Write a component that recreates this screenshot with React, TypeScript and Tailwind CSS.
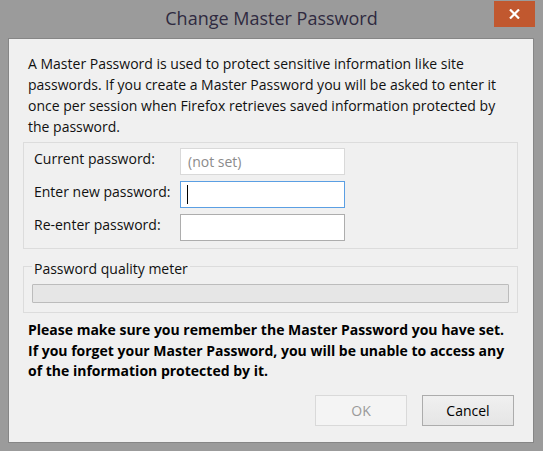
export default function App() {
  return (
    <div className="relative w-[543px] h-[451px] bg-[#9b9b9b] flex flex-col font-['Open_Sans',sans-serif] text-black">
      <div className="h-[38px] flex justify-center pt-[5px] text-[18px] leading-[26px] text-[#2f2a40]">
        Change Master Password
      </div>
      <button className="absolute top-[1px] right-[8px] w-[41px] h-[26px] bg-[#c1582f] flex items-center justify-center">
        <svg width="11" height="10" viewBox="0 0 11 10">
          <path d="M1 0.5 L10 9.5 M10 0.5 L1 9.5" stroke="white" strokeWidth="2.2" fill="none" />
        </svg>
      </button>
      <div className="ml-[8px] w-[526px] h-[405px] bg-[#f0f0f0] border border-[#868686] flex flex-col">
        <div className="pl-[19px] pt-[14px] text-[14px] leading-[21px] whitespace-nowrap text-[#111]">
          <div>A Master Password is used to protect sensitive information like site</div>
          <div>passwords. If you create a Master Password you will be asked to enter it</div>
          <div>once per session when Firefox retrieves saved information protected by</div>
          <div>the password.</div>
        </div>
        <div className="ml-[14px] mt-[5px] w-[495px] h-[107px] border border-[#dcdcdc] flex flex-col gap-[6px] pt-[5px] pl-[10px] text-[14px] text-[#111]">
          <div className="flex items-start">
            <div className="w-[146px] leading-[21px]">Current password:</div>
            <div className="w-[165px] h-[27px] bg-white border border-[#d9d9d9] pl-[7px] leading-[25px] text-[#8b8b8b]">(not set)</div>
          </div>
          <div className="flex items-start">
            <div className="w-[146px] leading-[21px]">Enter new password:</div>
            <div className="w-[165px] h-[27px] bg-white border border-[#5b9fe3] pl-[6px] flex items-center">
              <span className="w-[1px] h-[19px] bg-black"></span>
            </div>
          </div>
          <div className="flex items-start">
            <div className="w-[146px] leading-[21px]">Re-enter password:</div>
            <div className="w-[165px] h-[27px] bg-white border border-[#adadad]"></div>
          </div>
        </div>
        <fieldset className="ml-[14px] mt-[5px] w-[495px] border border-[#dcdcdc] px-[8px] pb-[9px]">
          <legend className="px-[2px] pt-[4px] text-[14px] leading-[21px] text-[#111]">Password quality meter</legend>
          <div className="mt-[5px] h-[19px] bg-[#e6e6e6] border border-[#bcbcbc] rounded-[1px]"></div>
        </fieldset>
        <div className="pl-[19px] mt-[7px] text-[14px] leading-[20.5px] font-bold whitespace-nowrap">
          <div>Please make sure you remember the Master Password you have set.</div>
          <div>If you forget your Master Password, you will be unable to access any</div>
          <div>of the information protected by it.</div>
        </div>
        <div className="flex justify-end gap-[15px] pr-[19px] mt-[13px]">
          <button className="w-[92px] h-[31px] bg-[#f4f4f4] border border-[#d9d9d9] text-[14px] text-[#9a9a9a]">OK</button>
          <button className="w-[92px] h-[31px] bg-gradient-to-b from-[#f0f0f0] to-[#e5e5e5] border border-[#acacac] text-[14px] text-black">Cancel</button>
        </div>
      </div>
    </div>
  );
}
